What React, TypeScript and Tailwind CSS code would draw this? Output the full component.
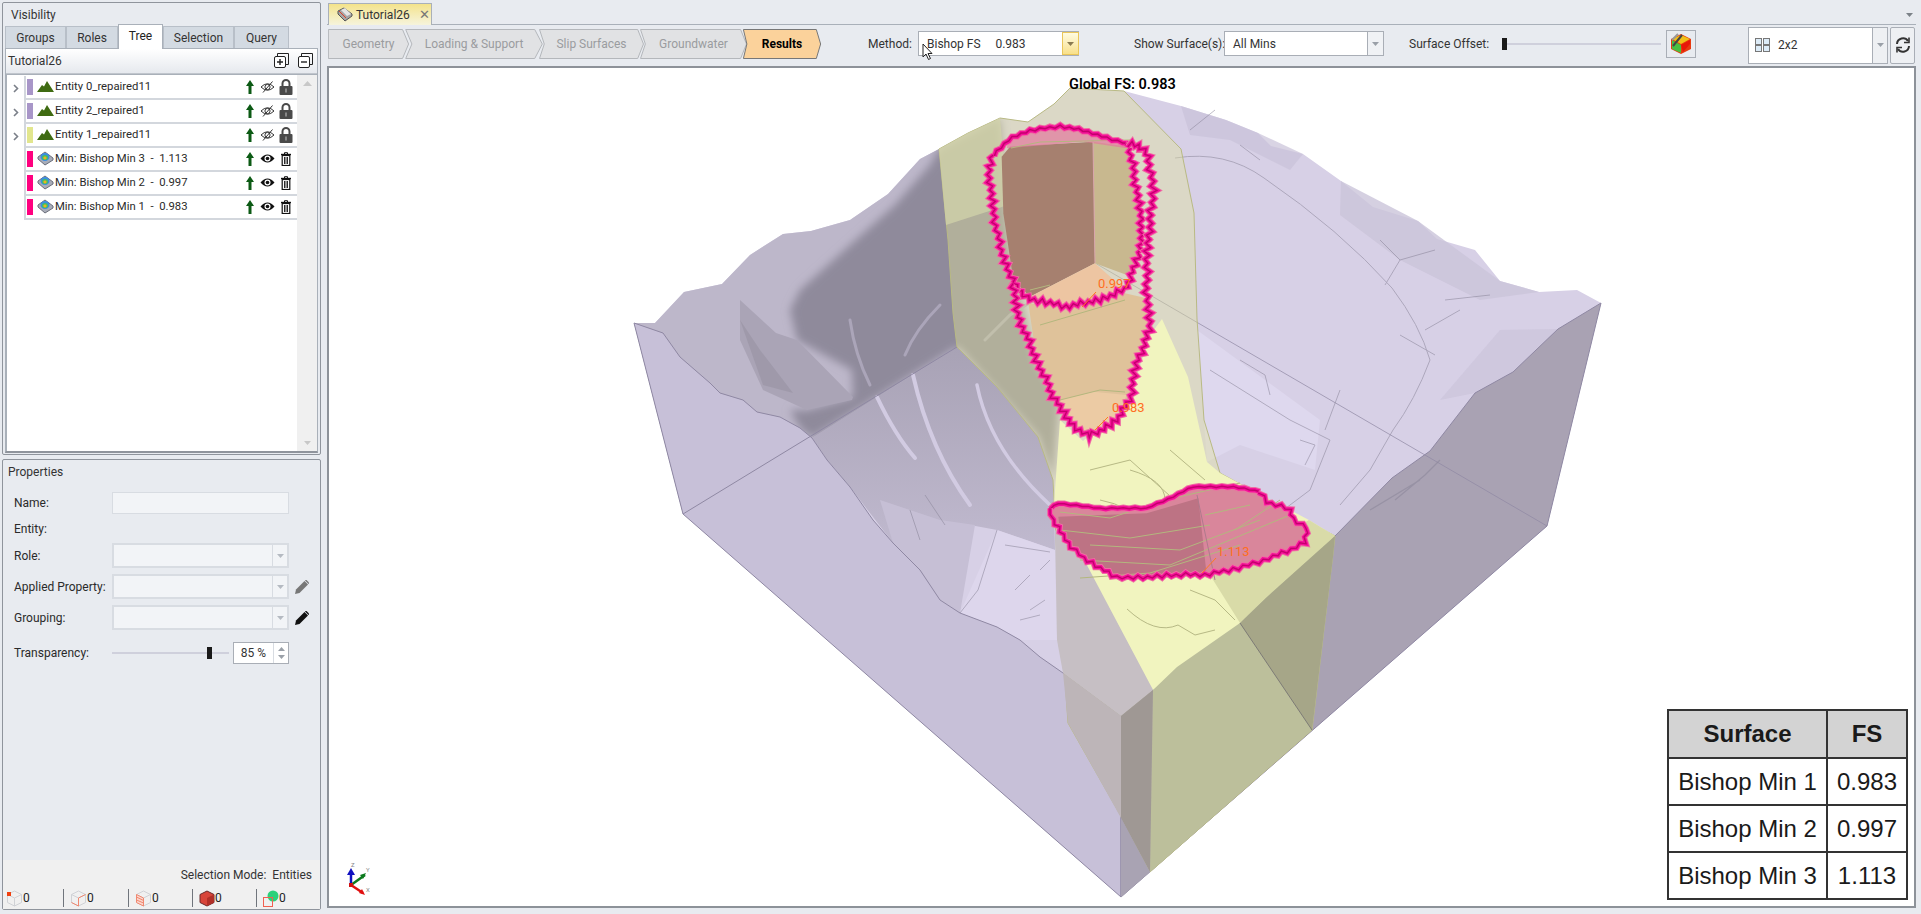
import React from 'react';

const font = { fontFamily: 'Roboto, "Liberation Sans", sans-serif' };

// zigzag along a polyline, used for the pink slip surface outlines
function jag(pts: number[][], amp: number, step: number) {
    const out: string[] = [];
    let flip = 1;
    let n = 0;
    for (let i = 0; i < pts.length - 1; i++) {
        const [x1, y1] = pts[i];
        const [x2, y2] = pts[i + 1];
        const len = Math.hypot(x2 - x1, y2 - y1);
        const c = Math.max(1, Math.round(len / step));
        for (let k = 0; k < c; k++) {
            const t = k / c;
            const a = amp * flip * (n % 5 === 0 ? 1.5 : n % 3 === 0 ? 0.5 : 1);
            out.push(`${(x1 + (x2 - x1) * t - ((y2 - y1) / len) * a).toFixed(1)},${(y1 + (y2 - y1) * t + ((x2 - x1) / len) * a).toFixed(1)}`);
            flip = -flip;
            n++;
        }
    }
    const last = pts[pts.length - 1];
    out.push(`${last[0]},${last[1]}`);
    return out.join(' ');
}

const z7 = (p: number[][]) => p.map(([x, y]) => [950 + x / 3, 80 + y / 3]);
const z8 = (p: number[][]) => p.map(([x, y]) => [1000 + x / 3, 460 + y / 3]);
const str = (p: number[][]) => p.map((q) => q.join(',')).join(' ');

const innerTop = z7([[130, 225], [175, 180], [240, 150], [330, 140], [400, 150], [470, 175], [535, 190]]);
const innerLoop = z7([[535, 190], [545, 240], [555, 300], [575, 430], [570, 520], [525, 630], [460, 655], [360, 680], [240, 660], [190, 610], [150, 500], [130, 400], [115, 260], [130, 225]]);
const outerLoop = z7([[535, 190], [565, 195], [595, 230], [610, 330], [600, 430], [590, 550], [590, 650], [600, 750], [560, 850], [540, 960], [500, 1020], [420, 1070], [360, 1030], [310, 950], [260, 840], [200, 700], [190, 610]]);
const lowerTop = z8([[150, 145], [175, 130], [300, 145], [440, 145], [520, 110], [580, 80], [700, 80], [780, 95]]);
const lowerRest = z8([[780, 95], [800, 125], [870, 150], [880, 175], [920, 205], [915, 245], [860, 275], [820, 290], [760, 310], [700, 330], [600, 345], [500, 345], [400, 355], [350, 350], [300, 325], [250, 295], [215, 260], [180, 215], [160, 180], [150, 145]]);
const lowerLoop = [...lowerTop, ...lowerRest];

function Pink({ pts, amp, step, w = 4 }: { pts: number[][]; amp: number; step: number; w?: number }) {
    const zig = jag(pts, amp, step);
    return (
        <g fill="none" strokeLinejoin="miter">
            <polyline points={zig} stroke="#ee6ea2" strokeWidth={w + 2} />
            <polyline points={zig} stroke="#f5109a" strokeWidth={w} />
            <polyline points={zig} stroke="#c4006c" strokeWidth={w / 3} />
        </g>
    );
}

const topEdge = '634,323 655,323 684,292 722,284 750,255 783,234 811,231 850,220 888,194 920,159 939,149 968,133 1000,118 1028,122 1054,104 1070,88 1124,91 1181,106 1226,120 1258,133 1271,146 1303,154 1341,181 1373,207 1418,221 1437,239 1475,250 1500,281 1539,292 1577,290 1601,303';
const frontLeft = '634,323 663,333 680,357 710,383 720,393 743,400 757,412 780,417 800,428 812,438 827,460 850,487 873,520 893,543 920,570 940,600 960,613 997,627 1020,640 1040,657 1063,673 1121,716';
const frontRight = '1121,716 1153,690 1177,667 1240,623 1267,597 1300,573 1335,536 1392,478 1430,451 1475,393 1513,372 1558,329 1601,303';

function Model() {
    return (
        <svg viewBox="329 68 1585 838" className="block w-full h-full">
            <defs>
                <filter id="soft" x="-10%" y="-10%" width="120%" height="120%">
                    <feGaussianBlur stdDeviation="4" />
                </filter>
                <linearGradient id="pit" x1="0" y1="0" x2="0" y2="1">
                    <stop offset="0" stopColor="#a8a2b5" />
                    <stop offset="1" stopColor="#c6bfd5" />
                </linearGradient>
                <clipPath id="block">
                    <polygon points={`${topEdge} 1547,526 1121,897 683,514`} />
                </clipPath>
            </defs>
            {/* whole block silhouette */}
            <polygon points={`${topEdge} 1547,526 1121,897 683,514`} fill="#d7d0e6" />
            {/* rim facets on the right bench */}
            <polygon points="1181,106 1226,120 1258,133 1303,154 1290,170 1230,140 1190,135" fill="#c9c2d9" opacity="0.7" />
            <polygon points="1341,181 1418,221 1500,281 1539,292 1480,300 1400,260 1340,215" fill="#cbc4da" opacity="0.8" />
            <polygon points="1475,393 1513,372 1558,329 1500,330 1440,400" fill="#cdc6dc" opacity="0.8" />
            {/* left hill, back wall */}
            <polygon points={`634,323 655,323 684,292 722,284 750,255 783,234 811,231 850,220 888,194 920,159 939,149 957,347 812,438 800,428 780,417 757,412 743,400 720,393 710,383 680,357 663,333`} fill="#bdb7ca" />
            <g clipPath="url(#block)">
                <polygon points="930,165 895,205 850,245 800,290 790,310 797,340 852,370 853,397 807,410 790,410 800,428 812,438 957,347 1038,437 1053,480 1060,400 1035,360 1010,250 1000,118 939,149" fill="#8f8a9b" filter="url(#soft)" />
            </g>
            <polygon points="740,300 776,333 797,340 853,397 852,400 807,410 763,390 740,340" fill="#aaa4b6" />
            <polygon points="740,320 763,385 793,393 760,350" fill="#8e8999" opacity="0.4" />
            <polygon points="634,323 683,514 812,438 800,428 780,417 757,412 743,400 720,393 710,383 680,357 663,333" fill="#a9a1b3" />
            {/* pit below the back edge */}
            <polygon points="812,438 957,347 997,387 1038,437 1053,480 1055,550 997,530 970,525 940,600 893,543 850,487 827,460" fill="url(#pit)" />
            <polygon points="997,530 1055,550 1057,640 1020,640 997,627 960,613" fill="#ddd6ec" />
            <polygon points="880,500 940,520 975,525 960,613 940,600 893,543" fill="#c6bfd5" />
            <g fill="none" stroke="#d2cbe2" strokeLinecap="round">
                <path d="M877 397 Q895 435 915 458" strokeWidth="4" />
                <path d="M913 375 Q930 450 970 505" strokeWidth="4" />
                <path d="M977 385 Q990 450 1050 505" strokeWidth="3.5" />
                <path d="M850 320 Q855 355 870 385" strokeWidth="3" stroke="#aba5b9" />
                <path d="M905 355 Q915 330 940 305" strokeWidth="3" stroke="#aba5b9" />
                <path d="M985 340 L1010 315 L1050 290" strokeWidth="3" stroke="#aba5b9" />
            </g>
            {/* front left face */}
            <polygon points={`${frontLeft} 1121,897 683,514`} fill="#c7c0d8" stroke="#8f88a3" strokeWidth="1" />
            {/* right face */}
            <polygon points={`${frontRight} 1547,526 1121,897`} fill="#a9a2b3" stroke="#8f88a3" strokeWidth="1" />
            {/* hidden back edges */}
            <line x1="1095" y1="263" x2="1547" y2="526" stroke="#8f88a3" strokeWidth="1" opacity="0.7" />
            <line x1="683" y1="514" x2="957" y2="347" stroke="#8f88a3" strokeWidth="1" />
            <polygon points="1197,330 1320,420 1315,470 1240,445 1207,462" fill="#ded8ee" />
            {/* cracks on the right bench */}
            <g fill="none" stroke="#8a8599" strokeWidth="1" opacity="0.55">
                <path d="M1175 158 Q1225 150 1264 178 Q1340 230 1392 288 Q1420 325 1430 360 Q1415 400 1393 430 L1370 470 L1340 505" />
                <path d="M1210 370 L1290 420 L1330 440 L1310 490 L1270 520" />
                <path d="M1340 390 L1325 430 M1400 335 L1435 355 M1380 240 L1400 260 L1385 285" />
                <path d="M1190 130 L1215 110 M1240 145 L1260 160 M1400 260 L1435 250 M1445 300 L1490 295 M1425 330 L1460 310" />
                <path d="M1440 460 L1425 475 L1395 500 M1370 510 L1420 480" strokeWidth="1.4" />
                <path d="M1240 360 L1265 375 L1270 395 M1300 440 L1315 445 L1305 465" />
                <path d="M997 530 L978 590 L960 613 M1005 545 L1050 552" />
                <path d="M1015 590 L1030 575 M1030 610 L1045 600 M1020 620 L1040 615 M1040 570 L1050 560" />
                <path d="M925 495 L945 525 M910 510 L920 540" />
            </g>
            {/* yellow stratum */}
            <polygon points="939,149 948,240 953,313 957,347 997,387 1038,437 1053,480 1057,560 1068,723 1122,818 1150,872 1312,730 1335,536 1220,473 1204,420 1197,319 1194,213 1181,149 1124,91 1070,88 1054,104 1028,122 1000,118 968,133" fill="#dfe39a" fillOpacity="0.42" stroke="#b9ba84" strokeWidth="1" />
            <polygon points="939,149 968,133 1000,118 1008,205 946,225" fill="#d2d3a9" opacity="0.75" />
            <polygon points="1060,420 1083,441 1130,398 1150,335 1162,319 1188,377 1207,462 1220,473 1309,520 1335,536 1239,632 1153,690 1079,552 1054,504" fill="#f1f4bf" />
            <polygon points="1240,623 1335,536 1309,520 1210,575" fill="#d9dba8" />
            <polygon points="1055,530 1080,552 1153,690 1121,716 1063,673 1057,640" fill="#c6bfc4" />
            <polygon points="1063,673 1121,716 1121,818 1068,723" fill="#bdb5b8" />
            <polygon points="1153,690 1150,872 1312,730 1333,557 1335,536 1267,597 1240,623 1177,667" fill="#bcbf9b" />
            <polygon points="1121,716 1153,690 1150,872 1121,818" fill="#9f9894" />
            <polygon points="1121,818 1150,872 1121,897" fill="#a9a3b3" />
            <polygon points="1240,623 1312,730 1333,557 1335,536 1267,597" fill="#a6a688" />
            <line x1="1240" y1="623" x2="1312" y2="730" stroke="#7d7b76" strokeWidth="1" />
            <g fill="none" stroke="#b7b985" strokeWidth="1">
                <path d="M1127 609 Q1155 635 1178 625 L1195 635 L1215 630" />
                <path d="M1190 590 L1215 600 L1235 620" />
                <path d="M1090 470 L1130 460 L1180 505 L1160 520 M1100 500 Q1130 505 1150 530" />
                <path d="M1130 470 Q1165 480 1165 500 M1170 450 L1205 480 M1180 520 L1205 490" />
            </g>
            {/* slip surfaces */}
            <polygon points={str(z7([[155, 230], [180, 200], [430, 185], [435, 550], [240, 650], [190, 600], [160, 400]]))} fill="#a6806f" />
            <polygon points={str(z7([[430, 185], [535, 200], [555, 320], [575, 450], [545, 590], [435, 550]]))} fill="#c8b88f" />
            <polygon points={str(z7([[240, 650], [435, 550], [525, 630], [460, 655], [360, 680]]))} fill="#edc5a2" />
            <polygon points={str(z7([[235, 670], [360, 680], [525, 640], [590, 655], [600, 750], [560, 850], [540, 960], [500, 1020], [420, 1070], [360, 1030], [310, 950], [260, 840]]))} fill="#dfc29a" />
            <polygon points={str(z7([[330, 960], [430, 935], [530, 945], [500, 1020], [420, 1070], [360, 1030]]))} fill="#eccba4" />
            <polygon points={str(z7([[175, 185], [240, 155], [330, 145], [400, 155], [535, 195], [530, 205], [400, 185], [170, 205]]))} fill="#e3799d" opacity="0.7" />
            <polygon points={str(lowerLoop)} fill="#d9869b" />
            <polygon points={str(z8([[175, 170], [440, 160], [595, 115], [620, 345], [500, 345], [400, 355], [350, 350], [250, 295], [180, 215]]))} fill="#bd7384" />
            <g fill="none" stroke="#b3b77e" strokeWidth="1">
                <path d="M1060 512 L1110 518 L1165 500 L1240 483 M1060 530 L1130 538 L1210 525 M1090 545 L1180 550 L1260 520 M1080 560 L1170 565 L1230 540 L1290 515" />
                <path d="M1080 578 L1150 573 L1240 545 M1235 530 L1280 500 M1205 515 L1250 505" />
                <path d="M1011 148 L1040 142 L1130 140 M1030 290 L1050 285 M1040 325 L1125 300 M1060 400 L1100 390 L1125 392" />
            </g>
            <line x1="1197" y1="495" x2="1215" y2="580" stroke="#ae7a8c" strokeWidth="1" />
            <line x1="1093" y1="142" x2="1095" y2="263" stroke="#d9a5ac" strokeWidth="1" />
            <Pink pts={innerTop} amp={1} step={5} w={4.5} />
            <Pink pts={innerLoop} amp={2.2} step={4} />
            <Pink pts={outerLoop} amp={2.4} step={4} />
            <Pink pts={lowerTop} amp={0.5} step={6} w={4.5} />
            <Pink pts={lowerRest} amp={1.6} step={5} w={4} />
            {/* factor labels */}
            <g stroke="#ff7a1f" strokeWidth="1">
                <line x1="1096" y1="292" x2="1082" y2="307" />
                <line x1="1108" y1="417" x2="1095" y2="430" />
                <line x1="1216" y1="558" x2="1202" y2="573" />
            </g>
            <g fill="#ff6f22" fontSize="13" fontFamily='"Liberation Sans Narrow", Roboto, sans-serif'>
                <text x="1098" y="288">0.997</text>
                <text x="1112" y="412">0.983</text>
                <text x="1217" y="556">1.113</text>
            </g>
            {/* axis triad */}
            <g>
                <path d="M351 885 V873" stroke="#1010c0" strokeWidth="2.5" />
                <path d="M347 875 L351 868 L355 875Z" fill="#1010c0" />
                <path d="M351 885 L365 875" stroke="#0d7a1e" strokeWidth="2.5" />
                <path d="M360 875 L366 873 L363 879Z" fill="#0d7a1e" />
                <path d="M351 885 L363 893" stroke="#e01010" strokeWidth="2.5" />
                <path d="M359 893 L365 895 L362 889Z" fill="#e01010" />
                <rect x="349" y="883" width="4" height="4" fill="#d01010" />
                <g fill="#8a8a8a" fontSize="6" fontFamily="Roboto, sans-serif">
                    <text x="351" y="867">Z</text>
                    <text x="366" y="872">Y</text>
                    <text x="366" y="892">X</text>
                </g>
            </g>
        </svg>
    );
}

function Mountain() {
    return (
        <svg width="17" height="11" viewBox="0 0 17 11" className="shrink-0">
            <path d="M0 11 L5 4 L7 5.5 L10 0 L17 11Z" fill="#3f6b12" />
        </svg>
    );
}

function SurfaceIcon() {
    return (
        <svg width="17" height="15" viewBox="0 0 17 15" className="shrink-0">
            <path d="M1 8 L8 14 L16 9 V7 L8 1 L1 6Z" fill="#a8acb8" stroke="#6a6e7a" strokeWidth="1" />
            <ellipse cx="8" cy="6" rx="4.5" ry="4" fill="#3a8ee0" />
            <ellipse cx="8" cy="6.5" rx="3" ry="2.6" fill="#46c060" />
            <ellipse cx="8" cy="7" rx="1.6" ry="1.4" fill="#f0b020" />
        </svg>
    );
}

function UpArrow() {
    return (
        <svg width="8" height="14" viewBox="0 0 8 14" className="shrink-0">
            <path d="M4 0 L8 6 H5.5 V14 H2.5 V6 H0Z" fill="#0c5a14" />
        </svg>
    );
}

function EyeOff() {
    return (
        <svg width="15" height="12" viewBox="0 0 15 12" className="shrink-0" fill="none" stroke="#333" strokeWidth="1">
            <path d="M1 6 Q7.5 -0.5 14 6 Q7.5 12.5 1 6Z" />
            <circle cx="7.5" cy="6" r="2.6" />
            <path d="M3 11.5 L12.5 0.5" />
        </svg>
    );
}

function EyeOn() {
    return (
        <svg width="15" height="11" viewBox="0 0 15 11" className="shrink-0">
            <path d="M0.5 5.5 Q7.5 -2.5 14.5 5.5 Q7.5 13.5 0.5 5.5Z" fill="#111" />
            <circle cx="7.5" cy="5.5" r="3" fill="#fff" />
            <circle cx="7.5" cy="5.5" r="1.8" fill="#111" />
        </svg>
    );
}

function Lock() {
    return (
        <svg width="14" height="16" viewBox="0 0 14 16" className="shrink-0">
            <path d="M3.5 7 V4.5 a3.5 3.5 0 0 1 7 0 V7" fill="none" stroke="#4a4a4a" strokeWidth="2" />
            <rect x="0.5" y="7" width="13" height="9" rx="1" fill="#4a4a4a" />
            <rect x="6" y="9.5" width="2" height="4" fill="#888" />
        </svg>
    );
}

function Trash() {
    return (
        <svg width="10" height="14" viewBox="0 0 10 14" className="shrink-0" fill="none" stroke="#111">
            <path d="M0 2.5 H10" strokeWidth="1.4" />
            <path d="M3.5 2 V0.7 H6.5 V2" strokeWidth="1" />
            <rect x="1.2" y="3.5" width="7.6" height="10" strokeWidth="1.2" />
            <path d="M3.5 5 V12 M5 5 V12 M6.5 5 V12" strokeWidth="0.9" />
        </svg>
    );
}

const treeRows = [
    { label: 'Entity 0_repaired11', color: 'bg-[#a896c8]', entity: true },
    { label: 'Entity 2_repaired1', color: 'bg-[#a896c8]', entity: true },
    { label: 'Entity 1_repaired11', color: 'bg-[#e2e68e]', entity: true },
    { label: 'Min: Bishop Min 3  -  1.113', color: 'bg-[#ff007f]', entity: false },
    { label: 'Min: Bishop Min 2  -  0.997', color: 'bg-[#ff007f]', entity: false },
    { label: 'Min: Bishop Min 1  -  0.983', color: 'bg-[#ff007f]', entity: false },
];

function TreeRow({ label, color, entity }: { label: string; color: string; entity: boolean }) {
    return (
        <div className="flex items-center h-[24px]">
            <div className="w-[17px] flex justify-center shrink-0">
                {entity && (
                    <svg width="6" height="9" viewBox="0 0 6 9">
                        <path d="M1 1 L4.5 4.5 L1 8" fill="none" stroke="#7a7f88" strokeWidth="1.6" />
                    </svg>
                )}
            </div>
            <div className="flex-1 h-[24px] flex items-center border-l-2 border-b-2 border-[#d3d7dd] pl-[1px] pb-[1px]">
                <div className={`w-[6px] h-[16px] shrink-0 mr-[4px] ${color}`} />
                <div className="w-[17px] flex justify-center mr-[1px]">{entity ? <Mountain /> : <SurfaceIcon />}</div>
                <span className="flex-1 text-[11.3px] text-[#2a2a2a] whitespace-pre leading-none">{label}</span>
                <UpArrow />
                <div className="w-[22px] flex justify-center ml-[2px]">{entity ? <EyeOff /> : <EyeOn />}</div>
                <div className="w-[16px] flex justify-center mr-[3px]">{entity ? <Lock /> : <Trash />}</div>
            </div>
        </div>
    );
}

function Tab({ label, w, active }: { label: string; w: string; active?: boolean }) {
    if (active) {
        return <div className={`${w} h-[25px] -mb-[1px] bg-white border border-b-0 border-[#a9b0b9] flex items-center justify-center text-[12px] text-[#222] pb-[2px]`}>{label}</div>;
    }
    return <div className={`${w} h-[22px] bg-[#d3dae2] border border-b-0 border-[#b8bfc8] flex items-center justify-center text-[12px] text-[#333]`}>{label}</div>;
}

function SmallArrow({ color = '#9aa0a8' }: { color?: string }) {
    return (
        <svg width="7" height="4" viewBox="0 0 7 4">
            <path d="M0 0 H7 L3.5 4Z" fill={color} />
        </svg>
    );
}

function PropCombo() {
    return (
        <div className="w-[177px] h-[25px] bg-[#f2f4f7] border-2 border-[#d8dce2] flex justify-end">
            <div className="w-[15px] border-l border-[#d8dce2] flex items-center justify-center">
                <SmallArrow color="#b5bac2" />
            </div>
        </div>
    );
}

function Pencil({ color }: { color: string }) {
    return (
        <svg width="14" height="14" viewBox="0 0 14 14" className="shrink-0">
            <path d="M0 14 L1 9.5 L9.5 1 L13 4.5 L4.5 13Z" fill={color} />
            <path d="M10.5 0 L14 3.5" stroke={color} strokeWidth="1.4" />
        </svg>
    );
}

function PropRow({ label, children }: { label: string; children?: React.ReactNode }) {
    return (
        <div className="flex items-center">
            <div className="w-[109px] pl-[11px] shrink-0 text-[12px] text-[#2a2a2a] whitespace-nowrap">{label}</div>
            {children}
        </div>
    );
}

function Status({ children, n, w, first, last }: { children: React.ReactNode; n: string; w: string; first?: boolean; last?: boolean }) {
    return (
        <div className={`${w} h-[18px] flex items-center ${first ? 'pl-[1px]' : 'pl-[6px]'} ${last ? '' : 'border-r border-[#70757c]'}`}>
            {children}
            <span className="text-[12px] text-[#222]">{n}</span>
        </div>
    );
}

function CubeFrame({ children }: { children?: React.ReactNode }) {
    return (
        <svg width="17" height="17" viewBox="0 0 17 17" className="shrink-0">
            <path d="M8.5 1 L15.5 4.5 V12.5 L8.5 16 L1.5 12.5 V4.5Z M1.5 4.5 L8.5 8 L15.5 4.5 M8.5 8 V16" fill="none" stroke="#d0d2d6" strokeWidth="1" />
            {children}
        </svg>
    );
}

function Chevron({ label, w, active, first }: { label: string; w: string; active?: boolean; first?: boolean }) {
    const fill = active ? '#fbd29b' : '#e1e2e4';
    const stroke = active ? '#777' : '#b4b7bb';
    return (
        <div className={`relative h-[30px] shrink-0 flex items-center justify-center ${w} ${first ? 'ml-[1px]' : '-ml-[4px]'}`}>
            <svg className="absolute inset-0 w-full h-full" viewBox="0 0 100 30" preserveAspectRatio="none">
                <path d={first ? 'M0.5 0.5 H92 L99.5 15 L92 29.5 H0.5Z' : 'M0.5 0.5 H94 L99.5 15 L94 29.5 H0.5 L5 15Z'} fill={fill} stroke={stroke} vectorEffect="non-scaling-stroke" />
            </svg>
            <span className={`relative text-[12px] ${active ? 'font-bold text-black' : 'text-[#9a9c9f]'}`}>{label}</span>
        </div>
    );
}

export default function App() {
    return (
        <div className="w-full h-screen bg-[#e8ebf0] flex overflow-hidden pl-[2px] pr-[5px] pt-[2px] pb-[4px]" style={font}>
            {/* left column */}
            <div className="w-[319px] shrink-0 flex flex-col gap-[4px]">
                <div className="h-[453px] border border-[#8f949c] rounded-[2px] flex flex-col px-[1px]">
                    <div className="h-[22px] pl-[7px] pt-[4px] text-[12px] text-[#333] leading-[16px]">Visibility</div>
                    <div className="flex items-end pl-[1px] h-[23px] relative z-10">
                        <Tab label="Groups" w="w-[61px]" />
                        <Tab label="Roles" w="w-[52px]" />
                        <Tab label="Tree" w="w-[45px]" active />
                        <Tab label="Selection" w="w-[71px]" />
                        <Tab label="Query" w="w-[55px]" />
                    </div>
                    <div className="flex-1 flex flex-col mx-[1px] mb-[1px] border border-[#a9b0b9] border-b-2 border-b-[#8f949c]">
                        <div className="h-[25px] bg-gradient-to-b from-white to-[#e6e9ee] border-b border-[#c0c5cc] flex items-center pl-[2px] pr-[3px] text-[12px] text-[#333]">
                            <span className="flex-1">Tutorial26</span>
                            <svg width="40" height="16" viewBox="0 0 40 16" fill="none" stroke="#222" strokeWidth="1">
                                <rect x="0.5" y="3.5" width="11" height="11" rx="1.5" fill="#fff" />
                                <path d="M3.5 3 V0.5 H14.5 V11.5 H12" />
                                <path d="M3 9 H9 M6 6 V12" strokeWidth="1.4" />
                                <rect x="24.5" y="3.5" width="11" height="11" rx="1.5" fill="#fff" />
                                <path d="M27.5 3 V0.5 H38.5 V11.5 H36" />
                                <path d="M27 9 H33" strokeWidth="1.4" />
                            </svg>
                        </div>
                        <div className="flex-1 flex bg-white border-t border-l border-[#a9b0b9]">
                            <div className="flex-1 pt-[1px]">
                                {treeRows.map((r) => (
                                    <TreeRow key={r.label} {...r} />
                                ))}
                            </div>
                            <div className="w-[20px] bg-[#f0f0f0] flex flex-col items-center justify-between py-[6px]">
                                <svg width="9" height="5" viewBox="0 0 9 5"><path d="M0 5 H9 L4.5 0Z" fill="#c8c8c8" /></svg>
                                <SmallArrow color="#c8c8c8" />
                            </div>
                        </div>
                    </div>
                </div>

                <div className="flex-1 border border-[#8f949c] rounded-[2px] flex flex-col">
                    <div className="h-[25px] pl-[5px] pt-[4px] text-[12px] text-[#333] leading-[16px]">Properties</div>
                    <div className="flex-1 flex flex-col">
                        <div className="mt-[7px]">
                            <PropRow label="Name:">
                                <div className="w-[177px] h-[22px] bg-[#f2f4f7] border border-[#d8dce2]" />
                            </PropRow>
                        </div>
                        <div className="h-[29px] flex items-center">
                            <PropRow label="Entity:" />
                        </div>
                        <div className="flex flex-col gap-[6px]">
                            <PropRow label="Role:"><PropCombo /></PropRow>
                            <PropRow label="Applied Property:">
                                <PropCombo />
                                <div className="ml-[6px]"><Pencil color="#777" /></div>
                            </PropRow>
                            <PropRow label="Grouping:">
                                <PropCombo />
                                <div className="ml-[6px]"><Pencil color="#111" /></div>
                            </PropRow>
                        </div>
                        <div className="mt-[12px]">
                            <PropRow label="Transparency:">
                                <div className="w-[117px] h-[2px] bg-[#cfd0dc] relative">
                                    <div className="absolute left-[95px] -top-[5px] w-[5px] h-[12px] bg-[#1a1a1a]" />
                                </div>
                                <div className="ml-[4px] w-[56px] h-[22px] bg-white border border-[#a9aeb6] flex">
                                    <span className="flex-1 text-[12px] text-[#333] text-center leading-[20px]">85 %</span>
                                    <div className="w-[15px] border-l border-[#d8dce2] flex flex-col items-center justify-center gap-[4px]">
                                        <svg width="7" height="4" viewBox="0 0 7 4"><path d="M0 4 H7 L3.5 0Z" fill="#9aa0a8" /></svg>
                                        <SmallArrow />
                                    </div>
                                </div>
                            </PropRow>
                        </div>
                    </div>
                    <div className="h-[49px] bg-[#f0f0f0] flex flex-col">
                        <div className="h-[29px] flex items-center justify-end pr-[8px] text-[12px] text-[#333]">Selection Mode:&nbsp; Entities</div>
                        <div className="flex pl-[2px]">
                            <Status n="0" w="w-[59px]" first>
                                <CubeFrame><rect x="1" y="2" width="4" height="4" fill="#f04010" /></CubeFrame>
                            </Status>
                            <Status n="0" w="w-[65px]">
                                <CubeFrame><path d="M1.5 12.5 L8.5 16 V8 L15.5 4.5" fill="none" stroke="#f08870" /></CubeFrame>
                            </Status>
                            <Status n="0" w="w-[64px]">
                                <CubeFrame><path d="M1.5 4.5 L8.5 8 V16 L1.5 12.5Z M1.5 7 L8.5 10.5 M1.5 10 L8.5 13" fill="#fbd5cc" stroke="#f08870" /></CubeFrame>
                            </Status>
                            <Status n="0" w="w-[64px]">
                                <svg width="16" height="17" viewBox="0 0 16 17" className="shrink-0">
                                    <path d="M8 1 L15 4.5 V12.5 L8 16 L1 12.5 V4.5Z" fill="#d8453a" stroke="#6a2a2a" />
                                    <path d="M8 8 V16 L15 12.5 V4.5Z" fill="#b23028" />
                                </svg>
                            </Status>
                            <Status n="0" w="w-[60px]" last>
                                <svg width="16" height="17" viewBox="0 0 16 17" className="shrink-0">
                                    <circle cx="10" cy="6" r="5.5" fill="#2cd17a" />
                                    <rect x="0.5" y="7.5" width="9" height="9" fill="none" stroke="#f06050" />
                                </svg>
                            </Status>
                        </div>
                    </div>
                </div>
            </div>

            {/* right column */}
            <div className="flex-1 flex flex-col pl-[6px] pb-[2px]">
                <div className="h-[23px] border-b border-[#a9b0b9] flex items-end relative">
                    <div className="w-[104px] ml-[1px] h-[22px] -mb-[1px] bg-gradient-to-b from-[#f4e38a] to-[#f6f4dc] border border-b-0 border-[#a9b0b9] flex items-center pl-[8px] gap-[3px] text-[12px] text-[#333]">
                        <svg width="16" height="15" viewBox="0 0 16 15" className="shrink-0">
                            <path d="M1 7 L8 14 L15 9 V7 L7 1 L1 4Z" fill="#a6a6a6" stroke="#555" strokeWidth="1" />
                            <path d="M2 4 L9 11" stroke="#e0402a" strokeWidth="1" />
                            <path d="M4 3 L8 1 L14 7 L10 9Z" fill="#e4e4e4" />
                        </svg>
                        <span>Tutorial26</span>
                        <span className="ml-[6px] text-[13px] text-[#777] leading-none">✕</span>
                    </div>
                    <div className="absolute right-[3px] top-[11px]"><SmallArrow color="#7c8288" /></div>
                </div>
                <div className="h-[41px] flex items-center relative pb-[4px]">
                    <Chevron label="Geometry" w="w-[81px]" first />
                    <Chevron label="Loading &amp; Support" w="w-[138px]" />
                    <Chevron label="Slip Surfaces" w="w-[105px]" />
                    <Chevron label="Groundwater" w="w-[107px]" />
                    <Chevron label="Results" w="w-[78px]" active />
                    <span className="ml-[47px] w-[50px] shrink-0 text-[12px] text-[#333] whitespace-nowrap">Method:</span>
                    <div className="w-[161px] shrink-0 h-[25px] bg-white border border-[#a9aeb6] flex items-center pl-[8px] text-[12px] text-[#333] whitespace-pre">
                        <span className="flex-1">Bishop FS     0.983</span>
                        <div className="w-[17px] h-full bg-gradient-to-b from-[#fffbe0] to-[#f8e08a] border border-[#eac65a] -mr-[1px] flex items-center justify-center">
                            <SmallArrow color="#8a7a50" />
                        </div>
                    </div>
                    <span className="ml-[55px] w-[90px] shrink-0 text-[12px] text-[#333] whitespace-nowrap">Show Surface(s):</span>
                    <div className="w-[160px] shrink-0 h-[25px] bg-white border border-[#a9aeb6] flex items-center pl-[8px] text-[12px] text-[#333]">
                        <span className="flex-1">All Mins</span>
                        <div className="w-[16px] h-full border-l border-[#a9aeb6] flex items-center justify-center bg-[#f0f2f5]">
                            <SmallArrow />
                        </div>
                    </div>
                    <span className="ml-[25px] w-[93px] shrink-0 text-[12px] text-[#333] whitespace-nowrap">Surface Offset:</span>
                    <div className="w-[159px] shrink-0 h-[2px] bg-[#cfd0dc] relative">
                        <div className="absolute left-0 -top-[5px] w-[5px] h-[12px] bg-[#1a1a1a]" />
                    </div>
                    <div className="ml-[5px] w-[30px] shrink-0 h-[28px] border border-[#a9aeb6] flex items-center justify-center">
                        <svg width="24" height="24" viewBox="0 0 24 24">
                            <path d="M12 2 L22 7 V17 L12 22 L2 17 V7Z" fill="#e83a10" />
                            <path d="M12 3 L21 7 L12 12 L3 7Z" fill="#f0c018" />
                            <path d="M3 8 L12 13 V21 L3 17Z" fill="#48c040" />
                            <path d="M12 13 L21 8 V12 L14 20Z" fill="#e81808" />
                            <path d="M4 14 L13 3" stroke="#444" strokeWidth="2" />
                            <path d="M3 8 L9 2" stroke="#999" strokeWidth="2" />
                        </svg>
                    </div>
                    <div className="ml-[52px] w-[140px] shrink-0 h-[37px] mt-[3px] bg-white border border-[#a9aeb6] flex items-center pl-[6px] text-[12px] text-[#333]">
                        <svg width="15" height="14" viewBox="0 0 15 14" className="mr-[8px]">
                            <rect x="0.5" y="0.5" width="6" height="6" fill="#dcebf7" stroke="#777" />
                            <rect x="8.5" y="0.5" width="6" height="6" fill="#dcebf7" stroke="#777" />
                            <rect x="0.5" y="7.5" width="6" height="6" fill="#dcebf7" stroke="#777" />
                            <rect x="8.5" y="7.5" width="6" height="6" fill="#dcebf7" stroke="#777" />
                        </svg>
                        <span className="flex-1">2x2</span>
                        <div className="w-[15px] h-full border-l border-[#a9aeb6] flex items-center justify-center bg-[#eef0f3]">
                            <SmallArrow />
                        </div>
                    </div>
                    <div className="ml-[2px] w-[25px] shrink-0 h-[37px] mt-[3px] bg-[#eef0f3] border border-[#a9aeb6] rounded-[2px] flex items-center justify-center">
                        <svg width="16" height="16" viewBox="0 0 16 16" fill="none" stroke="#333" strokeWidth="2">
                            <path d="M2 7 A6 6 0 0 1 13 4" />
                            <path d="M14 9 A6 6 0 0 1 3 12" />
                            <path d="M14 0.5 V5.5 H9" strokeWidth="1.6" />
                            <path d="M2 15.5 V10.5 H7" strokeWidth="1.6" />
                        </svg>
                    </div>
                    {/* mouse pointer */}
                    <svg width="12" height="18" viewBox="0 0 12 18" className="absolute left-[595px] top-[18px]">
                        <path d="M1 1 V14 L4 11 L6.5 16.5 L8.5 15.5 L6 10.5 H10Z" fill="#fff" stroke="#222" strokeWidth="1" />
                    </svg>
                </div>
                <div className="flex-1 bg-white border-2 border-[#8d9299] relative overflow-hidden">
                    <Model />
                    <div className="absolute left-[740px] top-[10px] text-[14.5px] font-semibold text-black leading-none whitespace-nowrap">Global FS: 0.983</div>
                    <table className="absolute right-[6px] bottom-[6px] w-[241px] border-collapse text-[24px] text-[#1a1a1a]" style={{ fontFamily: '"Liberation Sans", Arial, sans-serif' }}>
                        <thead>
                            <tr className="h-[48px] bg-[#d3d3d3]">
                                <th className="border-2 border-[#333] font-bold w-[159px]">Surface</th>
                                <th className="border-2 border-[#333] font-bold">FS</th>
                            </tr>
                        </thead>
                        <tbody className="bg-white">
                            <tr className="h-[47px]"><td className="border-2 border-[#333] text-center">Bishop Min 1</td><td className="border-2 border-[#333] text-center">0.983</td></tr>
                            <tr className="h-[47px]"><td className="border-2 border-[#333] text-center">Bishop Min 2</td><td className="border-2 border-[#333] text-center">0.997</td></tr>
                            <tr className="h-[47px]"><td className="border-2 border-[#333] text-center">Bishop Min 3</td><td className="border-2 border-[#333] text-center">1.113</td></tr>
                        </tbody>
                    </table>
                </div>
            </div>
        </div>
    );
}
